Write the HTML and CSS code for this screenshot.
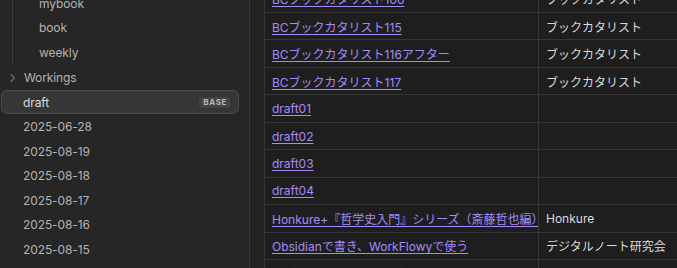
FILE: index.html
```html
<!DOCTYPE html>
<html lang="ja">
<head>
	<meta charset="UTF-8" />
	<title>draft</title>
	<link rel="stylesheet" href="styles.css">
</head>
<body>
	<div class="app">
		<aside class="sidebar">
			<div class="tree">
				<div class="group">
					<div class="item child">mybook</div>
					<div class="item child">book</div>
					<div class="item child">weekly</div>
				</div>
				<div class="item folder">
					<svg class="chev" width="11" height="10" viewBox="0 0 11 10"><path d="M4 1.5 L7.5 5 L4 8.5" fill="none" stroke="#6b6b6b" stroke-width="1.3" stroke-linecap="round" stroke-linejoin="round"/></svg>
					<span>Workings</span>
				</div>
				<div class="item active"><span>draft</span><span class="badge">BASE</span></div>
				<div class="item">2025-06-28</div>
				<div class="item">2025-08-19</div>
				<div class="item">2025-08-18</div>
				<div class="item">2025-08-17</div>
				<div class="item">2025-08-16</div>
				<div class="item">2025-08-15</div>
			</div>
		</aside>
		<main class="main">
			<table class="grid">
				<colgroup><col class="colName"><col class="colAuthor"></colgroup>
				<tr><td><a href="#">BCブックカタリスト106</a></td><td>ブックカタリスト</td></tr>
				<tr><td><a href="#">BCブックカタリスト115</a></td><td>ブックカタリスト</td></tr>
				<tr><td><a href="#">BCブックカタリスト116アフター</a></td><td>ブックカタリスト</td></tr>
				<tr><td><a href="#">BCブックカタリスト117</a></td><td>ブックカタリスト</td></tr>
				<tr><td><a href="#">draft01</a></td><td></td></tr>
				<tr><td><a href="#">draft02</a></td><td></td></tr>
				<tr><td><a href="#">draft03</a></td><td></td></tr>
				<tr><td><a href="#">draft04</a></td><td></td></tr>
				<tr><td><a href="#">Honkure+『哲学史入門』シリーズ（斎藤哲也編）</a></td><td>Honkure</td></tr>
				<tr><td><a href="#">Obsidianで書き、WorkFlowyで使う</a></td><td>デジタルノート研究会</td></tr>
				<tr><td><a href="#">ジブンノート・ガイドブック</a></td><td></td></tr>
			</table>
		</main>
	</div>
</body>
</html>
```

FILE: styles.css
```css
html,body {
	margin: 0;
	padding: 0;
	height: 100%;
}
body {
	background-color: #1e1e1e;
	font-family: "Inter", "Noto Sans CJK JP", sans-serif;
	font-size: 12px;
	overflow: hidden;
}
.app {
	display: flex;
	height: 100%;
}
.sidebar {
	width: 249px;
	flex: none;
	background-color: #262626;
	border-right: 1px solid #363636;
	overflow: hidden;
}
.tree {
	margin-top: -9.25px;
	padding: 0 10px 0 1px;
}
.group {
	margin-left: 11px;
	border-left: 1px solid #3a3a3a;
	padding-bottom: 1px;
}
.item {
	display: flex;
	align-items: center;
	height: 22.5px;
	border: 1px solid transparent;
	border-radius: 6px;
	padding-left: 21px;
	padding-right: 8px;
	color: #b3b3b3;
	letter-spacing: -0.1px;
}
.item.child {
	padding-left: 25px;
}
.item.folder {
	padding-left: 5px;
}
.chev {
	flex: none;
	margin-right: 6px;
}
.item.active {
	background-color: #363636;
	border-color: #4a4a4a;
	color: #dadada;
	justify-content: space-between;
}
.badge {
	font-size: 8px;
	font-weight: 700;
	letter-spacing: 0.6px;
	color: #b8b8b8;
	background-color: #444444;
	border-radius: 3px;
	padding: 1px 3px 1px 4px;
	line-height: 9px;
}
.main {
	flex: 1;
	min-width: 0;
	background-color: #242424;
	padding-left: 14px;
	overflow: hidden;
}
.grid {
	margin-top: -15.4px;
	border-collapse: collapse;
	table-layout: fixed;
	width: 480px;
	background-color: #1e1e1e;
}
.colName {
	width: 274px;
}
.colAuthor {
	width: 206px;
}
.grid td {
	height: 26.44px;
	padding: 0 7px;
	border: 1px solid #363636;
	color: #dadada;
	white-space: nowrap;
	overflow: hidden;
	vertical-align: middle;
}
.grid a {
	color: #a68af9;
	text-decoration: underline;
	text-decoration-color: #a68af9;
	text-underline-offset: 2px;
}
```
